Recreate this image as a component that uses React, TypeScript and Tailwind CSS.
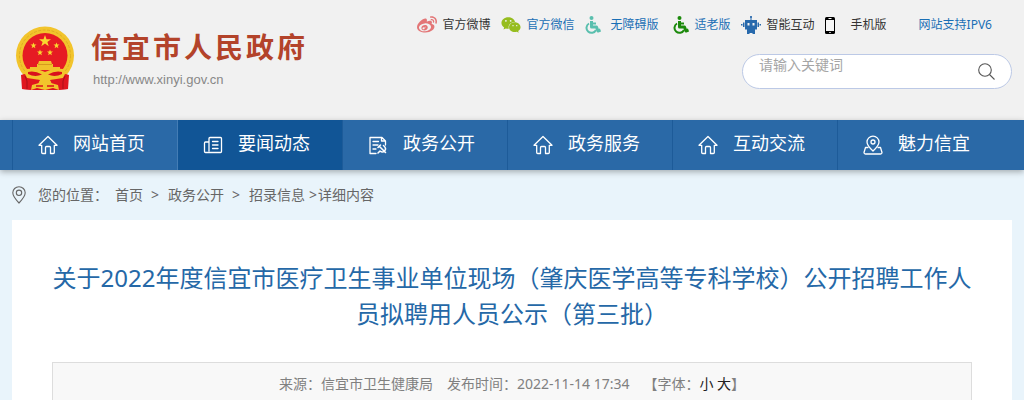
import { FaWeibo, FaWeixin } from 'react-icons/fa'

const Emblem = () => (
  <svg viewBox="0 0 60 65" className="w-[60px] h-[65px] shrink-0" aria-hidden="true">
    <path d="M8 46 L52 46 L53 63 L43 64 L17 64 L7 63 Z" fill="#d9111d" />
    <circle cx="30" cy="29.500" r="29" fill="#f2c42c" />
    <circle cx="30" cy="29.500" r="25.500" fill="none" stroke="#dfae22" strokeWidth="1" strokeDasharray="3 1.500" />
    <circle cx="30" cy="29.500" r="22.500" fill="#e61b23" />
    <path d="M30 9l1.500 4.200h4.500l-3.600 2.700 1.300 4.300-3.700-2.600-3.700 2.600 1.300-4.300-3.600-2.700h4.500z" fill="#f9d72f" />
    <path id="star" d="M18.500 16.500l.8 2.100h2.200l-1.800 1.400.7 2.200-1.900-1.300-1.900 1.300.7-2.200-1.800-1.400h2.200z" fill="#f9d72f" />
    <use href="#star" x="23" />
    <use href="#star" x="6.500" y="7" />
    <use href="#star" x="16.500" y="7" />
    <path d="M24 35h12l1 3h1v3h7v3H15v-3h7v-3h1z" fill="#f0c22c" />
    <path d="M23 38.500h14" stroke="#d69a1d" strokeWidth="1" />
    <path d="M12 43 Q21 41 30 46 Q39 41 48 43 Q51 45 51 49 Q40 56 30 52 Q20 56 9 49 Q9 45 12 43 Z" fill="#f2c42c" />
    <path d="M13 46 Q20 44.500 27 48.500 Q20 51.500 13 48 Z M47 46 Q40 44.500 33 48.500 Q40 51.500 47 48 Z" fill="#d9111d" />
    <path d="M6 49 L10 48 L12 52 L25 54 L20 64 L7 63 Z M54 49 L50 48 L48 52 L35 54 L40 64 L53 63 Z" fill="#e0161f" />
    <path d="M10 50 L12 55 L12 63 M50 50 L48 55 L48 63" fill="none" stroke="#a90f18" strokeWidth="1" />
    <path d="M16 64 L17 59 L24 57 L26 52 H34 L36 57 L43 59 L44 64 L38 62 L30 64 L22 62 Z" fill="#f2c42c" />
    <path d="M21 60 L28 60 M39 60 L32 60" stroke="#d9111d" strokeWidth="1.500" />
  </svg>
)

const AccessIcon = ({ className }) => (
  <svg viewBox="0 0 16 18" className={`w-4 h-[18px] ${className}`} fill="none" stroke="currentColor" aria-hidden="true">
    <circle cx="6.500" cy="2" r="2" fill="currentColor" stroke="none" />
    <path d="M6.500 5V11h5l1.500 4 2.500-1" strokeWidth="3" strokeLinejoin="round" />
    <path d="M6 7.500h5" strokeWidth="2" />
    <path d="M4 7.500A5 5 0 1 0 11 14" strokeWidth="2" />
  </svg>
)

const RobotIcon = () => (
  <svg viewBox="0 0 20 18" className="w-5 h-[18px]" fill="#2769ac" aria-hidden="true">
    <path d="M9.500 0h1v4h-1z" />
    <circle cx="10" cy="1" r="1" />
    <path fillRule="evenodd" d="M4 4h12v9.500H4z M6.500 7v2.500h2V7z M11.500 7v2.500h2V7z" />
    <path d="M2 6.500h1.500v4.500H2z M0 8h1.500v1.500H0z M16.500 6.500H18V11h-1.500z M18.500 8H20v1.500h-1.500z" />
    <path d="M6 13h8v5h-2.500v-1h-3v1H6z" />
  </svg>
)

const PhoneIcon = () => (
  <svg viewBox="0 0 10 17" className="w-[10px] h-[17px]" aria-hidden="true">
    <rect width="10" height="17" rx="1.500" fill="#000" />
    <path d="M1 3h8v11H1z" fill="#f6f6f6" />
    <path d="M3.500 1.500h3M4.300 15.500h1.400" stroke="#fff" strokeWidth="1" />
  </svg>
)

const HomeIcon = () => (
  <svg viewBox="0 0 20 20" className="w-5 h-5" fill="none" stroke="#fff" strokeWidth="1.300" strokeLinejoin="round" strokeLinecap="round" aria-hidden="true">
    <path d="M1 10.300 L10 1.500 L19 10.300 H16.300 V17.500 Q16.300 18.500 15.300 18.500 H12.500 V12.500 Q12.500 11.500 11.500 11.500 H8.500 Q7.500 11.500 7.500 12.500 V18.500 H4.700 Q3.700 18.500 3.700 17.500 V10.300 Z" />
  </svg>
)

const NewsIcon = () => (
  <svg viewBox="0 0 20 20" className="w-5 h-5" fill="none" stroke="#fff" strokeWidth="1.300" strokeLinejoin="round" strokeLinecap="round" aria-hidden="true">
    <path d="M6 16V3.500q0-1 1-1h10.500q1 0 1 1v13q0 1-1 1H2.500q-1 0-1-1V8q0-1 1-1H6" />
    <path d="M9.500 6.500h5.500M9.500 10h5.500M9.500 13.500h5.500" />
  </svg>
)

const FileIcon = () => (
  <svg viewBox="0 0 20 20" className="w-5 h-5" fill="none" stroke="#fff" strokeWidth="1.300" strokeLinejoin="round" strokeLinecap="round" aria-hidden="true">
    <path d="M8 18.500H2V2.500h12l3.500 3.500v4M13.500 2.500V6h4" />
    <path d="M5 6.500h5.500M5 10h5M5 14h3" />
    <path d="M10 12.500l2.500-2.500M11.500 11.500l6 6M15.500 10.500q3.500 3 1 5.500-2 2-4.500 0l-2 2" strokeWidth="1.600" />
  </svg>
)

const MapIcon = () => (
  <svg viewBox="0 0 20 20" className="w-5 h-5" fill="none" stroke="#fff" strokeWidth="1.300" strokeLinejoin="round" strokeLinecap="round" aria-hidden="true">
    <path d="M10 16 Q4 10.500 4 7 a6 5.800 0 0 1 12 0 Q16 10.500 10 16 Z" />
    <circle cx="10" cy="7" r="2" />
    <path d="M5 12.500H2.500L1 17.500q0 1.500 1.500 1.500h15q1.500 0 1.500-1.500l-1.500-5H15" />
  </svg>
)

const PinIcon = () => (
  <svg viewBox="0 0 14 18" className="w-[14px] h-[18px]" fill="none" stroke="#666" strokeWidth="1.100" aria-hidden="true">
    <path d="M7 17 Q.8 10.500 .8 6.800 a6.200 6.100 0 0 1 12.400 0 Q13.200 10.500 7 17 Z" />
    <circle cx="7" cy="6.800" r="2.700" />
  </svg>
)

const navItems = [
  { label: '网站首页', Icon: HomeIcon },
  { label: '要闻动态', Icon: NewsIcon, active: true },
  { label: '政务公开', Icon: FileIcon },
  { label: '政务服务', Icon: HomeIcon },
  { label: '互动交流', Icon: HomeIcon },
  { label: '魅力信宜', Icon: MapIcon },
]

const Header = () => (
  <header className="bg-[#f1f1f1]">
    <div className="max-w-[1000px] h-[120px] mx-auto flex justify-between">
      <a href="#" className="flex items-start gap-x-4 pt-[26px] pl-[3px]">
        <Emblem />
        <span className="flex flex-col">
          <span className="text-[28px] leading-[42px] tracking-[3px] font-bold text-[#b3432a]">信宜市人民政府</span>
          <span className="pl-[2px] font-['Liberation_Sans'] text-[13px] leading-6 text-[#888]">http://www.xinyi.gov.cn</span>
        </span>
      </a>
      <div className="flex flex-col items-end">
        <ul className="flex items-center h-[50px] pr-5 text-xs text-[#333] whitespace-nowrap">
          <li className="mr-[10px]">
            <a href="#" className="flex items-center gap-x-[6px]"><FaWeibo className="w-5 h-5 text-[#e37677]" />官方微博</a>
          </li>
          <li className="mr-[10px]">
            <a href="#" className="flex items-center gap-x-[6px] text-[#1a6fb5]"><FaWeixin className="w-5 h-5 text-[#96bd1f]" />官方微信</a>
          </li>
          <li className="mr-[14px]">
            <a href="#" className="flex items-center gap-x-[10px] text-[#1a6fb5]"><AccessIcon className="text-[#5abfae]" />无障碍版</a>
          </li>
          <li className="mr-[10px]">
            <a href="#" className="flex items-center gap-x-[6px] text-[#1a6fb5]"><AccessIcon className="text-[#1c8a0c]" />适老版</a>
          </li>
          <li className="mr-[10px]">
            <a href="#" className="flex items-center gap-x-[6px]"><RobotIcon />智能互动</a>
          </li>
          <li className="mr-8">
            <a href="#" className="flex items-center gap-x-4"><PhoneIcon />手机版</a>
          </li>
          <li><a href="#" className="text-[#1a6fb5]">网站支持IPV6</a></li>
        </ul>
        <form className="flex w-[270px] h-[35px] mt-1 px-4 bg-white border border-[#bcc9e6] rounded-full">
          <input type="text" aria-label="请输入关键词" placeholder="请输入关键词" className="flex-1 min-w-0 h-5 text-sm outline-none placeholder:text-[#a5a5a5]" />
          <button type="button" aria-label="搜索">
            <svg viewBox="0 0 17 17" className="w-[17px] h-[17px]" fill="none" stroke="#555" strokeWidth="1.100">
              <circle cx="7" cy="7" r="6.300" />
              <path d="M11.500 11.500l5 5" />
            </svg>
          </button>
        </form>
      </div>
    </div>
  </header>
)

const Nav = () => (
  <nav className="relative bg-[#2a69a7] shadow-[0_2px_6px_rgba(0,0,0,0.3)]">
    <ul className="max-w-[1000px] mx-auto flex">
      {navItems.map(({ label, Icon, active }) => (
        <li key={label} className="w-[165px]">
          <a
            href="#"
            className={`flex items-center h-[50px] gap-x-[15px] pl-[25px] border-l text-lg text-white ${active ? 'bg-[#115596] border-[#447db5]' : 'border-[#1d5b99]'}`}
          >
            <Icon />
            <span className="pb-1">{label}</span>
          </a>
        </li>
      ))}
    </ul>
  </nav>
)

const App = () => {
  return (
    <div className="h-screen overflow-hidden bg-[#e9f4fb] font-['Noto_Sans','Noto_Sans_CJK_SC',sans-serif]">
      <Header />
      <Nav />
      <main className="max-w-[1000px] mx-auto">
        <div className="flex items-center h-[50px] text-sm text-[#666]">
          <PinIcon />
          <span className="ml-3 mr-[7px]">您的位置：</span>
          <a href="#">首页</a>
          <span className="mx-2 w-[9px]">&gt;</span>
          <a href="#">政务公开</a>
          <span className="mx-2 w-[9px]">&gt;</span>
          <a href="#">招录信息</a>
          <span className="ml-1 w-[9px]">&gt;</span>
          <span>详细内容</span>
        </div>
        <article className="px-10 pt-10 bg-white">
          <h1 className="text-2xl leading-9 text-center text-[#2568a7]">
            关于2022年度信宜市医疗卫生事业单位现场（肇庆医学高等专科学校）公开招聘工作人员拟聘用人员公示（第三批）
          </h1>
          <div className="flex justify-center items-center h-11 mt-[30px] bg-[#f8f8f8] border border-[#ddd] text-sm text-[#808080]">
            <span>来源：信宜市卫生健康局</span>
            <span className="ml-[14px]">发布时间：2022-11-14 17:34</span>
            <span className="ml-[14px]">
              【字体：<button type="button" className="text-[#222]">小</button> <button type="button" className="text-[#222]">大</button>】
            </span>
          </div>
        </article>
      </main>
    </div>
  )
}

export default App
